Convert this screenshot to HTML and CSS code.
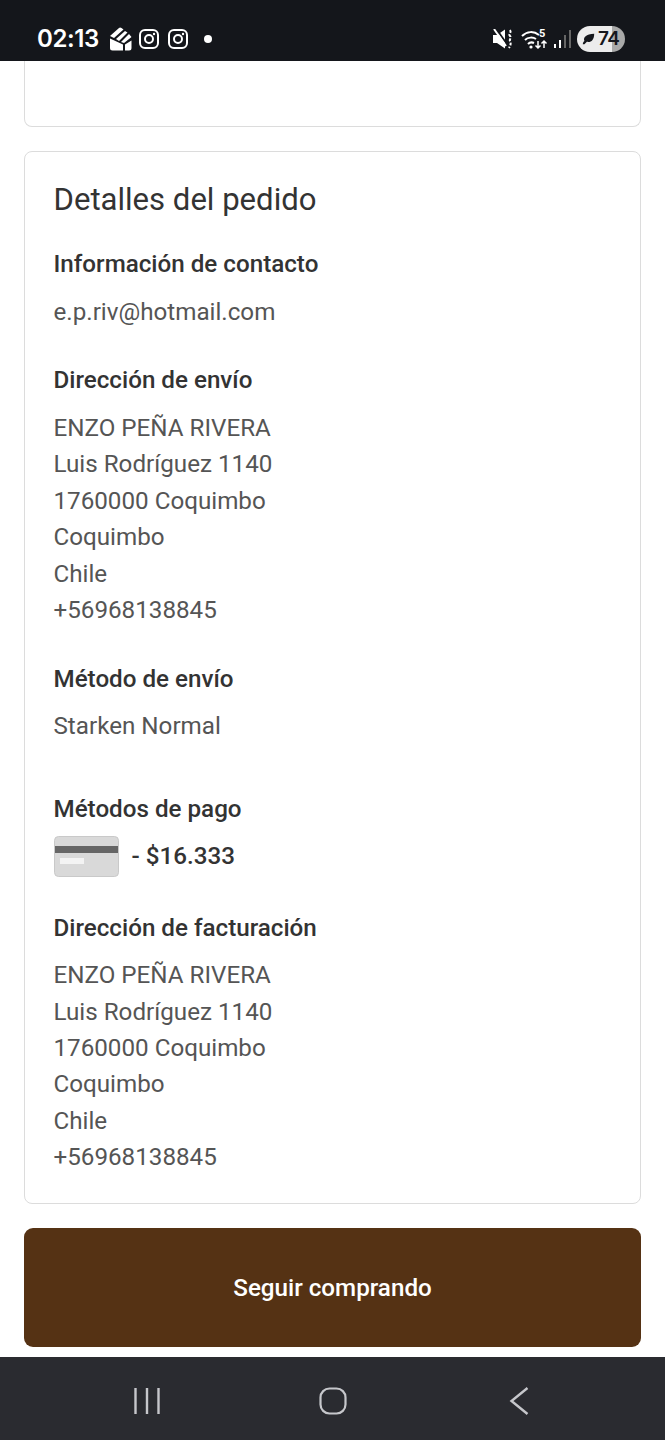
FILE: index.html
```html
<!DOCTYPE html>
<html lang="es">
<head>
<meta charset="utf-8">
<title>Detalles del pedido</title>
<link rel="stylesheet" href="styles.css">
</head>
<body>
<div class="screen">
  <header class="status">
    <div class="status-left">
      <span class="time">02:13</span>
      <svg class="ic-box" viewBox="0 0 24 24" width="24" height="24"><path fill="#fff" d="M1 11.500 14 17.500V23.500H3.500Q1 23.500 1 21zM16 17.500 22.500 13.500V21Q22.500 23.500 20 23.500H16z"/><path fill="#fff" d="M1 9 10 1Q11 0 12.500 1L14.500 2.500 5 11zM7 12 16 4 18.500 5.500 10 14zM12 15 20 7 22.500 10 15 16z"/></svg>
      <svg class="ic-ig" viewBox="0 0 22 22" width="22" height="22"><rect x="2" y="2" width="18" height="18" rx="5" fill="none" stroke="#fff" stroke-width="2"/><circle cx="11" cy="11" r="4" fill="none" stroke="#fff" stroke-width="2"/><circle cx="16" cy="6" r="1.200" fill="#fff"/></svg>
      <svg class="ic-ig" viewBox="0 0 22 22" width="22" height="22"><rect x="2" y="2" width="18" height="18" rx="5" fill="none" stroke="#fff" stroke-width="2"/><circle cx="11" cy="11" r="4" fill="none" stroke="#fff" stroke-width="2"/><circle cx="16" cy="6" r="1.200" fill="#fff"/></svg>
      <span class="dot"></span>
    </div>
    <div class="status-right">
      <svg class="ic-mute" viewBox="0 0 20 20" width="20" height="20"><path fill="#fff" d="M0 6h4l8-5.500V19.500L4 14H0z"/><path stroke="#14161b" stroke-width="2" d="M4 1l12 17" fill="none"/><path stroke="#fff" stroke-width="2" d="M1 0l12 17" fill="none"/><path stroke="#fff" stroke-width="2" stroke-dasharray="3 1.500" fill="none" d="M17 1c2 3-2 4 0 6s-1 3 0 5 1 4-1 7"/></svg>
      <svg class="ic-wifi" viewBox="0 0 28 24" width="28" height="24"><path fill="none" stroke="#fff" stroke-width="2" d="M1 9c5-5 12-5 17-1M4 13c3-3 8-3 11-1M7 17c2-2 4-2 6-1"/><circle cx="10" cy="20" r="1.600" fill="#fff"/><path fill="none" stroke="#fff" stroke-width="1.500" d="M17 14v7M14.500 18.500 17 21l2.500-2.500M23 21v-7M20.500 16.500 23 14l2.500 2.500"/><text x="18" y="10" class="wifi-num">5</text></svg>
      <svg class="ic-signal" viewBox="0 0 18 20" width="18" height="20"><rect x="0" y="15" width="2" height="4" fill="#fff"/><rect x="5" y="11" width="2" height="8" fill="#fff"/><rect x="10" y="6" width="2" height="13" fill="#666"/><rect x="15" y="1" width="2" height="18" fill="#666"/></svg>
      <div class="battery"><svg class="leaf" viewBox="0 0 16 16" width="13" height="13"><path fill="#15171c" d="M1 15c0-2 1-3 2-4C1 7 5 2 15 2c0 8-4 11-9 10l-3 3z"/></svg><span>74</span></div>
    </div>
  </header>

  <main class="content">
    <section class="card card-top"></section>

    <section class="card details">
      <h2 class="title">Detalles del pedido</h2>

      <h3 class="label">Información de contacto</h3>
      <p class="text">e.p.riv@hotmail.com</p>

      <h3 class="label">Dirección de envío</h3>
      <address class="text">ENZO PEÑA RIVERA<br>Luis Rodríguez 1140<br>1760000 Coquimbo<br>Coquimbo<br>Chile<br>+56968138845</address>

      <h3 class="label">Método de envío</h3>
      <p class="text text-ship">Starken Normal</p>

      <h3 class="label">Métodos de pago</h3>
      <div class="pay">
        <svg class="ic-card" viewBox="0 0 66 41" width="66" height="41"><rect x=".5" y=".5" width="64" height="40" rx="4" fill="#d9d9d9" stroke="#c9c9c9"/><rect x="1" y="10" width="63" height="7" fill="#666"/><rect x="6" y="22" width="24" height="6" fill="#f3f3f3"/></svg>
        <span class="amount">- $16.333</span>
      </div>

      <h3 class="label">Dirección de facturación</h3>
      <address class="text text-last">ENZO PEÑA RIVERA<br>Luis Rodríguez 1140<br>1760000 Coquimbo<br>Coquimbo<br>Chile<br>+56968138845</address>
    </section>

    <button class="cta" type="button">Seguir comprando</button>
  </main>

  <nav class="navbar">
    <svg viewBox="0 0 28 28" width="28" height="28"><path stroke="#c6c7cb" stroke-width="2.400" fill="none" d="M2.500 1v26M14 1v26M25.500 1v26"/></svg>
    <svg viewBox="0 0 28 28" width="28" height="28"><rect x="1.500" y="1.500" width="25" height="25" rx="9" fill="none" stroke="#c6c7cb" stroke-width="2.200"/></svg>
    <svg viewBox="0 0 28 28" width="28" height="28"><path stroke="#c6c7cb" stroke-width="2.400" fill="none" d="M22.500 1 6.500 14l16 13"/></svg>
  </nav>
</div>
</body>
</html>
```
FILE: styles.css
```css
* { box-sizing: border-box; }
html, body { margin: 0; padding: 0; background: #fff; }
body { font-family: Roboto, "Liberation Sans", sans-serif; color: #333; }
.screen { width: 665px; height: 1440px; display: flex; flex-direction: column; overflow: hidden; }

.status { height: 61px; flex: none; background: #14161b; display: flex; justify-content: space-between; align-items: center; padding: 16px 40px 0 37px; color: #fff; }
.status-left, .status-right { display: flex; align-items: center; }
.time { font-family: Inter, Roboto, sans-serif; font-size: 24px; font-weight: 600; letter-spacing: -.4px; margin-right: 10px; }
.ic-box { margin-right: 5px; }
.ic-ig { margin-right: 7px; }
.dot { width: 8px; height: 8px; border-radius: 50%; background: #fff; margin-left: 8px; }
.ic-mute { margin-right: 8px; }
.ic-wifi { margin-right: 5px; }
.wifi-num { font: 700 11px Roboto, sans-serif; fill: #fff; }
.ic-signal { margin-right: 5px; }
.battery { width: 48px; height: 26px; border-radius: 13px; background: linear-gradient(90deg, #ececec 73%, #a9a9a9 73%); color: #15171c; display: flex; align-items: center; gap: 3px; padding-left: 5px; font-family: Inter, Roboto, sans-serif; font-size: 19px; font-weight: 600; letter-spacing: -.5px; }
.leaf { flex: none; }

.content { flex: 1; display: flex; flex-direction: column; padding: 0 24px 10px; gap: 24px; }
.card { border: 1px solid #dcdcdc; border-radius: 8px; background: #fff; }
.card-top { height: 66px; border-top: 0; border-radius: 0 0 8px 8px; }
.details { height: 1053px; padding: 30px 28.500px 0; }

.title { margin: 0 0 28px; font-size: 31.100px; font-weight: 400; line-height: 36px; color: #333; }
.label { margin: 0 0 11.500px; font-size: 24.200px; font-weight: 500; line-height: 36px; color: #333; }
.text { margin: 0 0 32.500px; font-size: 24.200px; font-weight: 400; font-style: normal; line-height: 36.400px; color: #555; }
.text-ship { margin-bottom: 46.500px; }
.text-last { margin-bottom: 0; }

.pay { display: flex; align-items: center; gap: 12px; margin-bottom: 33px; margin-top: -3px; }
.amount { font-size: 24.200px; font-weight: 500; color: #333; }

.cta { flex: none; height: 119px; border: 0; border-radius: 9px; background: #553214; color: #fff; font-family: Roboto, sans-serif; font-size: 24.200px; font-weight: 500; }

.navbar { height: 83px; flex: none; background: #2a2b30; display: flex; justify-content: space-between; align-items: center; padding: 4px 132px 0 133px; }
```
